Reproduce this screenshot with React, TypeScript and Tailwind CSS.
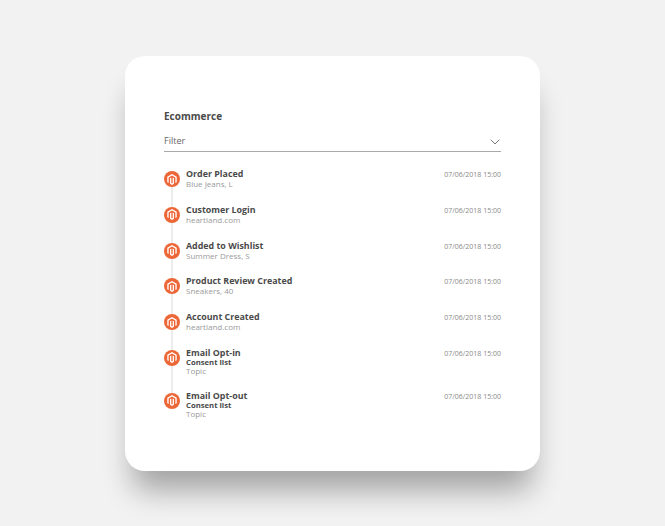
import { ChevronDown } from "lucide-react";

type Item = { title: string; bold?: string; sub: string };

const items: Item[] = [
  { title: "Order Placed", sub: "Blue Jeans, L" },
  { title: "Customer Login", sub: "heartland.com" },
  { title: "Added to Wishlist", sub: "Summer Dress, S" },
  { title: "Product Review Created", sub: "Sneakers, 40" },
  { title: "Account Created", sub: "heartland.com" },
  { title: "Email Opt-in", bold: "Consent list", sub: "Topic" },
  { title: "Email Opt-out", bold: "Consent list", sub: "Topic" },
];

const MagentoIcon = () => (
  <div className="relative z-10 flex h-4 w-4 shrink-0 items-center justify-center rounded-full bg-[#ec6737]">
    <svg viewBox="0 0 24 28" className="h-[11px] w-[10px]" fill="white">
      <path d="M12 0 L0 7 V21 L3.4 23 V9 L12 4 L20.6 9 V23 L24 21 V7 Z" />
      <path d="M13.7 23 L12 24 L10.3 23 V9 L7 11 V25 L12 28 L17 25 V11 L13.7 9 Z" />
    </svg>
  </div>
);

const Row = ({ item, last }: { item: Item; last: boolean }) => (
  <div className={`relative flex items-start ${item.bold ? "pb-[16px]" : "pb-[16.75px]"}`}>
    {!last && <div className="absolute left-[7px] top-2 h-full w-0.5 bg-[#ececec]" />}
    <div className="mt-0.5">
      <MagentoIcon />
    </div>
    <div className="ml-1.5 flex-1">
      <div className="text-[8.9px] leading-[10px] font-bold text-[#4a4a4a]">{item.title}</div>
      {item.bold && <div className="text-[7.7px] leading-[8px] font-bold text-[#4a4a4a]">{item.bold}</div>}
      <div className="text-[8px] leading-[9px] text-[#9a9a9a]">{item.sub}</div>
    </div>
    <div className="pt-px text-[7px] leading-[10px] text-[#8a8a8a]">07/06/2018 15:00</div>
  </div>
);

export default function App() {
  return (
    <div className="flex h-[526px] w-[665px] items-start justify-center bg-[#f2f2f2] pt-14 font-['Open_Sans',sans-serif] antialiased">
      <div className="h-[415px] w-[415px] rounded-[20px] bg-white px-[39px] pt-[53px] shadow-[0_27px_30px_-8px_rgba(0,0,0,0.33)]">
        <div className="text-[10px] leading-[15px] font-bold text-[#4a4a4a]">Ecommerce</div>
        <div className="mt-[7px] flex h-[21px] items-center justify-between border-b border-[#a9a9a9]">
          <span className="text-[9px] text-[#666]">Filter</span>
          <ChevronDown className="-mr-[2px] mt-px h-4 w-4 text-[#555]" strokeWidth={1.2} />
        </div>
        <div className="mt-[17px]">
          {items.map((item, i) => (
            <Row key={item.title} item={item} last={i === items.length - 1} />
          ))}
        </div>
      </div>
    </div>
  );
}
